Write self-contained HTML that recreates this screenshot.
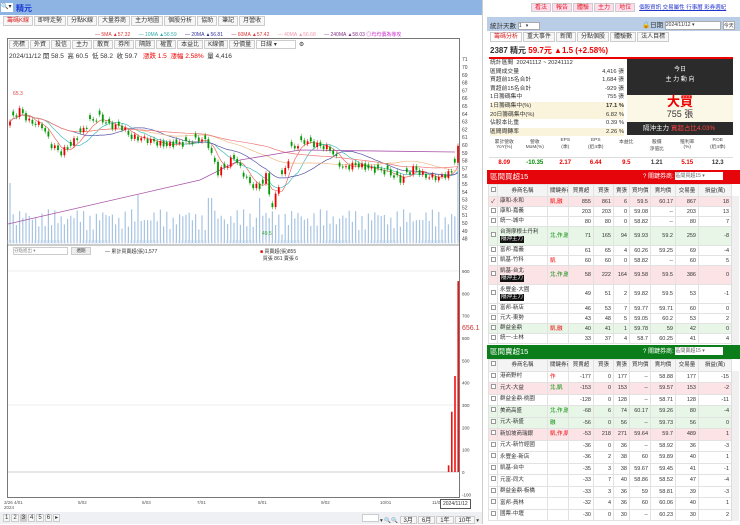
<!DOCTYPE html>
<html><head><meta charset="utf-8">
<style>
*{box-sizing:border-box;margin:0;padding:0}
body{width:740px;height:524px;overflow:hidden;background:#fff;font-family:"Liberation Sans","Noto Sans CJK TC",sans-serif;font-size:6px;color:#333;position:relative}
.a{position:absolute}
.tab{display:inline-block;border:1px solid #ccc;background:#f7f7f7;padding:1px 3px;height:10px;line-height:7px;font-size:6px;margin-right:1px}
table{border-collapse:collapse;table-layout:fixed}
td{border:1px solid #e2e2e2;font-size:5.5px;padding:0 2px;text-align:right;white-space:nowrap;overflow:hidden;line-height:8px}
#t1 td{height:10px}
#t2 td{height:11.5px}
#t1 tr.d td{height:19px}
td.l{text-align:left}
td.c{text-align:center}
tr.h td{background:#f4f4f4;text-align:center}
#t1 tr.h td{height:12px}
.pk td{background:#fbe3e6}.gr td{background:#e8f6e8}
.bd{background:#111;color:#fff;font-size:5.5px;padding:0 1px;display:inline-block;line-height:7px}
.cb{display:inline-block;width:5px;height:5px;border:1px solid #999;background:#fff}
.red{color:#e00}.grn{color:#080}
</style></head><body>
<div class="a" style="left:0;top:0;width:482px;height:15px;background:#8db4e2"></div>
<div class="a" style="left:1px;top:3px;width:12px;height:9px;background:#fff;font-size:6px;line-height:9px">🔍▾</div>
<div class="a" style="left:16px;top:3px;color:#1a3bd6;font-size:8px;font-weight:bold">精元</div>
<div class="a" style="left:3px;top:16px;white-space:nowrap"><span class="tab" style="color:#d22">籌碼K線</span><span class="tab">即時走勢</span><span class="tab">分點K線</span><span class="tab">大量券商</span><span class="tab">主力地圖</span><span class="tab">個股分析</span><span class="tab">協助</span><span class="tab">筆記</span><span class="tab">月營收</span></div>
<div class="a" style="left:95px;top:31px;white-space:nowrap;font-size:5px">
<span style="color:#d33">— 5MA ▲57.32</span>&nbsp;&nbsp;&nbsp;&nbsp;&nbsp; <span style="color:#3aa">— 10MA ▲56.59</span>&nbsp;&nbsp;&nbsp;&nbsp;&nbsp; <span style="color:#339">— 20MA ▲56.81</span>&nbsp;&nbsp;&nbsp;&nbsp;&nbsp; <span style="color:#d33">— 60MA ▲57.42</span>&nbsp;&nbsp;&nbsp;&nbsp;&nbsp; <span style="color:#e9a">— 40MA ▲56.68</span>&nbsp;&nbsp;&nbsp;&nbsp;&nbsp; <span style="color:#838">— 240MA ▲58.03</span> <span style="color:#c3c">◎均均價為導攻</span></div>
<div class="a" style="left:7px;top:38px;width:453px;height:460px;border:1px solid #777"></div>
<div class="a" style="left:9px;top:40px;white-space:nowrap"><span class="tab" style="height:9px">売標</span><span class="tab" style="height:9px">外資</span><span class="tab" style="height:9px">投信</span><span class="tab" style="height:9px">主力</span><span class="tab" style="height:9px">散買</span><span class="tab" style="height:9px">券所</span><span class="tab" style="height:9px">隔餘</span><span class="tab" style="height:9px">權置</span><span class="tab" style="height:9px">本益比</span><span class="tab" style="height:9px">K線價</span><span class="tab" style="height:9px">分價量</span><span class="tab" style="height:9px;width:40px;background:#fff">日線 ▾</span> ⚙</div>
<div class="a" style="left:9px;top:50px;font-size:6.5px;white-space:nowrap">2024/11/12 開 58.5 &nbsp;高 60.5 &nbsp;低 58.2 &nbsp;收 59.7 &nbsp;&nbsp;<span class="red">漲跌 1.5 &nbsp;漲幅 2.58%</span> &nbsp;量 4,416</div>
<svg class="a" style="left:0;top:0" width="482" height="524" id="ch"></svg>
<div class="a" style="left:13px;top:247px;width:55px;height:8px;border:1px solid #ccc;font-size:4.5px;color:#888">分點進出 ▾</div>
<div class="a" style="left:71px;top:247px;width:20px;height:8px;border:1px solid #ccc;background:#eee;font-size:4.5px;text-align:center">週期</div>
<div class="a" style="left:105px;top:248px;font-size:5px">— 累計買賣超(張)1,577</div>
<div class="a" style="left:260px;top:248px;font-size:5px"><span style="color:#d00">■</span> 買賣超(張)855<br>&nbsp;&nbsp;買張 861 賣張 6</div>
<div class="a" style="left:462px;top:325px;color:#c33;font-size:7px">656.1</div>
<div class="a" style="left:4px;top:500px;font-size:4.5px;color:#555;white-space:nowrap">3/26 4/01<br>2024</div>
<div class="a" style="left:440px;top:499px;border:1px solid #555;background:#fff;font-size:5px;padding:1px 2px">2024/11/12</div>
<div class="a" style="left:0;top:512px;width:482px;height:12px;background:#eef0f3"></div>
<div class="a" style="left:3px;top:514px;font-size:5.5px;white-space:nowrap"><span class="tab" style="height:8px;padding:0 1px">1</span><span class="tab" style="height:8px;padding:0 1px">2</span><span class="tab" style="height:8px;padding:0 1px;background:#ccc">3</span><span class="tab" style="height:8px;padding:0 1px">4</span><span class="tab" style="height:8px;padding:0 1px">5</span><span class="tab" style="height:8px;padding:0 1px">6</span><span class="tab" style="height:8px;padding:0 1px">▸</span></div>
<div class="a" style="left:362px;top:514px;font-size:5.5px;white-space:nowrap"><span class="tab" style="height:8px;width:17px;background:#fff"></span>▾ 🔍🔍 <span class="tab" style="height:8px">3月</span><span class="tab" style="height:8px">6月</span><span class="tab" style="height:8px">1年</span><span class="tab" style="height:8px">10年</span>▾</div>

<div class="a" style="left:482px;top:0;width:258px;height:524px;background:#fff;border-left:1px solid #ccc"></div>
<div class="a" style="left:531px;top:3px;white-space:nowrap;font-size:5.5px"><span class="tab" style="height:9px;color:#d22;background:#fde">看法</span><span class="tab" style="height:9px;color:#d22;background:#fde">報告</span><span class="tab" style="height:9px;color:#d22;background:#fde">體驗</span><span class="tab" style="height:9px;color:#d22;background:#fde">主力</span><span class="tab" style="height:9px;color:#d22;background:#fde">地位</span> &nbsp;<span style="color:#23c;text-decoration:underline">個股資訊 交易屬性 行事曆 彩券週紀</span></div>
<div class="a" style="left:487px;top:17px;width:253px;height:14px;background:#b9cde6"></div>
<div class="a" style="left:490px;top:20px;font-size:6.5px">統計天數 <span style="display:inline-block;width:22px;height:8px;background:#fff;border:1px solid #aaa;font-size:5px;vertical-align:middle">1 &nbsp;&nbsp;▾</span></div>
<div class="a" style="left:642px;top:19px;font-size:6.5px;white-space:nowrap">🔒日期 <span style="display:inline-block;width:56px;height:9px;background:#fff;border:1px solid #aaa;font-size:5px;vertical-align:middle">2024/11/12 ▾</span> <span style="display:inline-block;width:12px;height:9px;background:#fff;border:1px solid #aaa;font-size:5px;vertical-align:middle">今天</span></div>
<div class="a" style="left:490px;top:32px;white-space:nowrap"><span class="tab" style="color:#d22;background:#fff">籌碼分析</span><span class="tab">重大事件</span><span class="tab">新聞</span><span class="tab">分點個股</span><span class="tab">體驗數</span><span class="tab">法人目標</span></div>
<div class="a" style="left:490px;top:45px;font-size:8px;font-weight:bold;white-space:nowrap">2387 精元 <span class="red">59.7元 ▲1.5 (+2.58%)</span></div>
<div class="a" style="left:489px;top:57px;width:244px;height:1.5px;background:#e00"></div>
<div class="a" style="left:490px;top:59px;width:134px;font-size:5.8px;line-height:8.6px;overflow:hidden">
<div style="white-space:nowrap">統計區間 &nbsp;20241112 ~ 20241112</div>
<div style="display:flex;justify-content:space-between"><span>區間成交量</span><span>4,416 張</span></div>
<div style="display:flex;justify-content:space-between"><span>買超前15名合計</span><span>1,684 張</span></div>
<div style="display:flex;justify-content:space-between"><span>賣超前15名合計</span><span>-929 張</span></div>
<div style="display:flex;justify-content:space-between"><span>1日籌碼集中</span><span>755 張</span></div>
<div style="display:flex;justify-content:space-between;background:#fbf4dc"><span>1日籌碼集中(%)</span><b>17.1 %</b></div>
<div style="display:flex;justify-content:space-between;background:#fbf4dc"><span>20日籌碼集中(%)</span><span>6.82 %</span></div>
<div style="display:flex;justify-content:space-between"><span>佔股本比重</span><span>0.39 %</span></div>
<div style="display:flex;justify-content:space-between;background:#fbf4dc"><span>區間周轉率</span><span>2.26 %</span></div>
</div>
<div class="a" style="left:627px;top:59px;width:106px;height:36px;background:#2b2b2b;color:#fff;text-align:center;font-size:6px;line-height:10px;padding-top:6px">今日<br>主 力 動 向</div>
<div class="a" style="left:627px;top:95px;width:106px;height:27px;background:#fcf8e8;text-align:center"><div style="color:#e00;font-size:13px;font-weight:bold;line-height:14px">大買</div><div style="font-size:9px;line-height:11px">755 張</div></div>
<div class="a" style="left:627px;top:122px;width:106px;height:13px;background:#2b2b2b;color:#fff;font-size:6.5px;line-height:13px;padding-left:16px;white-space:nowrap">隔沖主力 <span style="color:#f44">買超占比4.03%</span></div>
<div class="a" style="left:489px;top:138px;width:244px;display:flex;text-align:center;font-size:4.8px;color:#444">
<div style="flex:1">累計營收<br>YoY(%)</div><div style="flex:1">營收<br>MoM(%)</div><div style="flex:1">EPS<br>(季)</div><div style="flex:1">EPS<br>(近4季)</div><div style="flex:1">本益比</div><div style="flex:1">股價<br>淨值比</div><div style="flex:1">殖利率<br>(%)</div><div style="flex:1">ROE<br>(近4季)</div></div>
<div class="a" style="left:489px;top:157px;width:244px;display:flex;text-align:center;font-size:6px;font-weight:bold;border-top:1px solid #ddd;padding-top:2px">
<div style="flex:1" class="red">8.09</div><div style="flex:1" class="grn">-10.35</div><div style="flex:1" class="red">2.17</div><div style="flex:1" class="red">6.44</div><div style="flex:1" class="red">9.5</div><div style="flex:1">1.21</div><div style="flex:1" class="red">5.15</div><div style="flex:1">12.3</div></div>
<div class="a" style="left:487px;top:170px;width:253px;height:14px;background:#e5050b;color:#fff;font-size:7.5px;line-height:14px;padding-left:3px">區間買超15<span style="position:absolute;left:156px;font-size:6px">? 關鍵券商: <span style="display:inline-block;width:48px;height:8px;background:#fff;color:#666;font-size:5px;line-height:8px;vertical-align:middle">區間買超15 ▾</span></span></div>
<div style="position:absolute;left:488px;top:184px;width:252px;height:161px;overflow:hidden"><table style="width:243px" id="t1"></table><div class="a" style="left:243px;top:12px;width:8px;height:150px;background:#f0f0f0;border-left:1px solid #ddd"></div></div>
<div class="a" style="left:487px;top:345px;width:253px;height:14px;background:#0b7d1a;color:#fff;font-size:7.5px;line-height:14px;padding-left:3px">區間賣超15<span style="position:absolute;left:156px;font-size:6px">? 關鍵券商: <span style="display:inline-block;width:48px;height:8px;background:#fff;color:#666;font-size:5px;line-height:8px;vertical-align:middle">區間賣超15 ▾</span></span></div>
<div style="position:absolute;left:488px;top:359px;width:252px;height:165px;overflow:hidden"><table style="width:243px" id="t2"></table><div class="a" style="left:243px;top:12px;width:8px;height:150px;background:#f0f0f0;border-left:1px solid #ddd"></div></div>
<script>
const hd=['<span class="cb"></span>','券商名稱','關鍵券商','買賣超','買張','賣張','買均價','賣均價','交易量','損益(萬)'];
function cg(){return '<colgroup>'+[9,50,21,25,20,16,21,25,23,33].map(w=>`<col style="width:${w}px">`).join('')+'</colgroup>'}
function mk(id,rows){let h=cg()+'<tr class="h">'+hd.map(x=>`<td>${x}</td>`).join('')+'</tr>';
rows.forEach(r=>{let cls=(r[9]||'')+(r[10]?' d':'');let nm=r[0];if(r[10])nm+='<br><span class="bd">隔沖主力</span>';
h+=`<tr class="${cls}"><td class="c">${r[11]?'✓':'<span class="cb"></span>'}</td><td class="l" style="white-space:normal;line-height:7.5px">${nm}</td><td class="l ${r[1].includes('北')||r[1]=='融'?'grn':'red'}">${r[1]}</td>`+r.slice(2,9).map(v=>`<td>${v}</td>`).join('')+'</tr>'});
document.getElementById(id).innerHTML=h}
mk('t1',[
['康和-永和','凱,融',855,861,6,59.5,60.17,867,18,'pk',0,1],
['康和-嘉義','',203,203,0,59.08,'--',203,13],
['統一-城中','',80,80,0,58.82,'--',80,7],
['台灣摩根士丹利','北,作,融',71,165,94,59.93,59.2,259,-8,'gr',1],
['富邦-嘉義','',61,65,4,60.26,59.25,69,-4],
['凱基-竹科','凱',60,60,0,58.82,'--',60,5],
['凱基-台北','北,作,融',58,222,164,59.58,59.5,386,0,'pk',1],
['永豐金-大園','',49,51,2,59.82,59.5,53,-1,'',1],
['富邦-新店','',46,53,7,59.77,59.71,60,0],
['元大-東勢','',43,48,5,59.05,60.2,53,2],
['群益金鼎','凱,融',40,41,1,59.78,59,42,0,'gr'],
['統一-士林','',33,37,4,58.7,60.25,41,4]]);
mk('t2',[
['港商野村','作',-177,0,177,'--',58.88,177,-15],
['元大-大益','北,凱',-153,0,153,'--',59.57,153,-2,'pk'],
['群益金鼎-桃園','',-128,0,128,'--',58.71,128,-11],
['美商高盛','北,作,融',-68,6,74,60.17,59.26,80,-4,'gr'],
['元大-新盛','融',-56,0,56,'--',59.73,56,0,'gr'],
['新加坡商瑞銀','凱,作,凱',-53,218,271,59.64,59.7,489,1,'pk'],
['元大-新竹經國','',-36,0,36,'--',58.92,36,-3],
['永豐金-新店','',-36,2,38,60,59.89,40,1],
['凱基-台中','',-35,3,38,59.67,59.45,41,-1],
['元富-同大','',-33,7,40,58.86,58.52,47,-4],
['群益金鼎-板橋','',-33,3,36,59,58.81,39,-3],
['富邦-員林','',-32,4,36,60,60.06,40,1],
['國票-中壢','',-30,0,30,'--',60.23,30,2]]);

const K=[[0,63],[3,64.5],[6,63],[10,62.5],[13,60],[16,59],[19,60],[22,61.5],[25,63],[28,63.5],[31,62.5],[35,62.3],[38,61],[42,60.8],[48,60],[55,60.2],[60,60.8],[62,60],[65,56.5],[68,57.5],[70,58.5],[72,57],[75,55],[78,54.5],[80,56],[82,52],[84,55],[86,57],[88,59.5],[92,60.5],[96,60],[100,59.5],[104,57],[108,57.5],[112,57],[118,56.5],[122,55.5],[126,57],[130,56],[134,55.8],[138,56.5],[140,59.5]];
let C=[];for(let i=0;i<=140;i++){let j=0;while(K[j+1]&&K[j+1][0]<i)j++;let a=K[j],b=K[j+1]||a;let t=b[0]==a[0]?0:(i-a[0])/(b[0]-a[0]);C.push(a[1]+(b[1]-a[1])*t+Math.sin(i*2.3)*0.4)}
const X=i=>10+i*3.2,Y=p=>145+(60-p)*7.8;
let s='';
for(let p=48;p<=71;p++){s+=`<text x="462" y="${Y(p)+2}" font-size="5" fill="#444">${p}</text>`}
[900,800,700,600,500,400,300,200,100,0,-100].forEach(v=>{let y=472-v*0.2233;s+=`<text x="462" y="${y+2}" font-size="4.5" fill="#444">${v}</text>`});
s+=`<line x1="8" y1="245" x2="459" y2="245" stroke="#999"/><line x1="8" y1="472" x2="459" y2="472" stroke="#ccc"/><line x1="8" y1="405" x2="459" y2="405" stroke="#eee"/><line x1="8" y1="271" x2="459" y2="271" stroke="#eee"/>`;
for(let i=0;i<=140;i++){let h=8+Math.abs(Math.sin(i*1.7)*18)+Math.abs(Math.sin(i*0.37)*8);if(i==0)h=60;if(i==40)h=48;if(i==62||i==63)h=45;if(i==78)h=45;if(i==140)h=85;s+=`<rect x="${X(i)-0.6}" y="${243-h}" width="1.2" height="${h}" fill="#a8c4e4"/>`}
for(let x=8;x<459;x+=3)s+=`<line x1="${x}" y1="240" x2="${x}" y2="244" stroke="#b9cde6" stroke-width="0.6"/>`;
function ma(n,col){let d='';for(let i=0;i<=140;i++){let a=0,c=0;for(let k=Math.max(0,i-n+1);k<=i;k++){a+=C[k];c++}d+=(i?'L':'M')+X(i).toFixed(1)+','+Y(a/c).toFixed(1)}s+=`<path d="${d}" fill="none" stroke="${col}" stroke-width="0.7"/>`}
ma(5,'#e66');ma(10,'#4bb');ma(20,'#55a');ma(40,'#eb8');ma(60,'#e77');
s+=`<path d="M8,224 L200,180 L240,160 L300,150 L455,152" fill="none" stroke="#a5a" stroke-width="0.8"/>`;
for(let i=0;i<=140;i++){let o=i?C[i-1]:C[0]-0.5,c=C[i];if(i%3==1){o=c+0.5}let up=c>=o;let col=up?'#e00':'#090';let t=Math.max(o,c)+0.3,b=Math.min(o,c)-0.3;s+=`<line x1="${X(i)}" y1="${Y(t)}" x2="${X(i)}" y2="${Y(b)}" stroke="${col}" stroke-width="0.5"/><rect x="${X(i)-0.9}" y="${Y(Math.max(o,c))}" width="1.8" height="${Math.max(1,Math.abs(o-c)*7.8)}" fill="${col}"/>`}
s+=`<text x="13" y="95" font-size="5" fill="#d44">65.3</text><text x="262" y="235" font-size="5" fill="#3a3">49.5</text>`;
[[137,30],[138,270],[139,430],[140,855]].forEach(([i,v])=>{s+=`<rect x="${X(i)-0.6}" y="${472-v*0.2233}" width="1.6" height="${v*0.2233}" fill="#e11"/>`});
[['5/02',78],['6/03',142],['7/01',197],['8/01',258],['9/02',321],['10/01',380],['11/0',432]].forEach(([t,x])=>s+=`<text x="${x}" y="504" font-size="4.5" fill="#555">${t}</text>`);
document.getElementById('ch').innerHTML=s;
</script>
</body></html>
